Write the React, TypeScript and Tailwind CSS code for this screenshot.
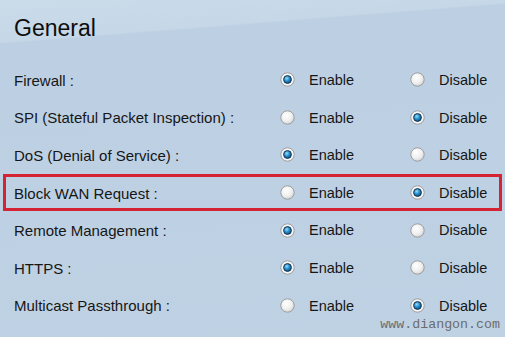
import React from "react";

type Row = { label: string; enabled: boolean; highlight?: boolean };

const rows: Row[] = [
  { label: "Firewall :", enabled: true },
  { label: "SPI (Stateful Packet Inspection) :", enabled: false },
  { label: "DoS (Denial of Service) :", enabled: true },
  { label: "Block WAN Request :", enabled: false, highlight: true },
  { label: "Remote Management :", enabled: true },
  { label: "HTTPS :", enabled: true },
  { label: "Multicast Passthrough :", enabled: false },
];

function Radio({ checked }: { checked: boolean }) {
  return (
    <svg width="15" height="15" viewBox="0 0 15 15" className="shrink-0">
      <defs>
        <radialGradient id="uncheck" cx="0.4" cy="0.35" r="0.7">
          <stop offset="0" stopColor="#ffffff" />
          <stop offset="0.6" stopColor="#efefef" />
          <stop offset="1" stopColor="#d2d2d2" />
        </radialGradient>
        <radialGradient id="dot" cx="0.4" cy="0.35" r="0.7">
          <stop offset="0" stopColor="#9adcf8" />
          <stop offset="0.5" stopColor="#1f8fcf" />
          <stop offset="1" stopColor="#0a4a7a" />
        </radialGradient>
      </defs>
      <circle cx="7.5" cy="7.5" r="6.7" fill={checked ? "#f6f6f6" : "url(#uncheck)"} stroke="#9c9c9c" strokeWidth="1" />
      {checked && <circle cx="7.5" cy="7.5" r="3.9" fill="url(#dot)" stroke="#1a3550" strokeWidth="1" />}
    </svg>
  );
}

export default function App() {
  return (
    <div
      className="relative w-[505px] h-[337px] overflow-hidden bg-[linear-gradient(175.5deg,#cadbea_0px,#c6d7e7_42px,#bdd0e3_44px,#bfd2e4_100%)] text-[#161616]"
      style={{ fontFamily: '"Liberation Sans", Arial, sans-serif' }}
    >
      <div className="h-[61px] pl-[14px] pt-[13px] text-[23px] leading-[30px] text-[#0d0d0d]">General</div>
      <div className="flex flex-col">
        {rows.map((r, i) => (
          <div
            key={i}
            className={
              "grid grid-cols-[266px_130px_1fr] items-center h-[37.6px] " +
              (r.highlight ? "mx-[3px] border-[3px] border-[#d42434] pl-[8px]" : "pl-[14px]")
            }
          >
            <span className="text-[15px] leading-none pt-[1px]">{r.label}</span>
            <div className="flex items-center gap-[14px] text-[14.5px] leading-none">
              <Radio checked={r.enabled} />
              <span className="pt-[1px]">Enable</span>
            </div>
            <div className="flex items-center gap-[14px] text-[14.5px] leading-none">
              <Radio checked={!r.enabled} />
              <span className="pt-[1px]">Disable</span>
            </div>
          </div>
        ))}
      </div>
      <div
        className="absolute right-[5px] bottom-[6px] text-[13.3px] leading-none text-[#6c6c6c]"
        style={{ fontFamily: '"Liberation Mono", "DejaVu Sans Mono", monospace' }}
      >
        www.diangon.com
      </div>
    </div>
  );
}
